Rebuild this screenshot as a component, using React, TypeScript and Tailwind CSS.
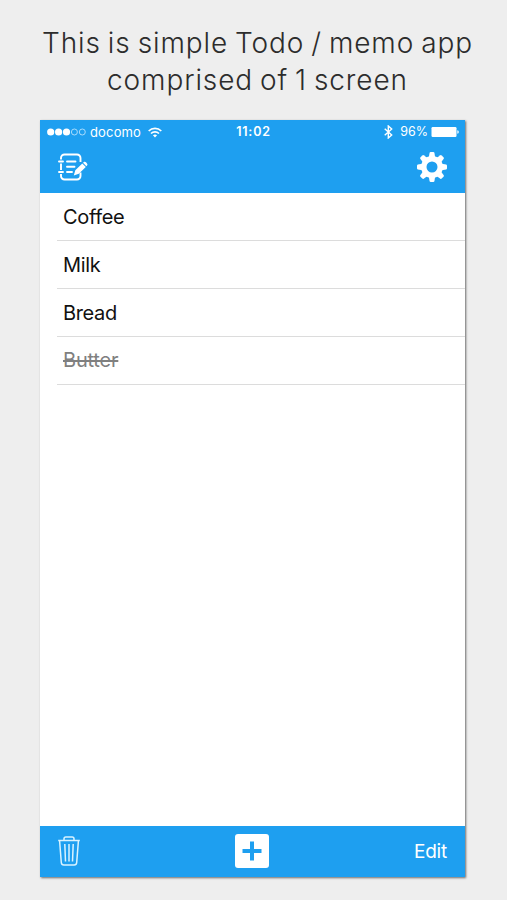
type TodoItem = {
    id: number;
    title: string;
    done: boolean;
};

const items: TodoItem[] = [
    { id: 1, title: "Coffee", done: false },
    { id: 2, title: "Milk", done: false },
    { id: 3, title: "Bread", done: false },
    { id: 4, title: "Butter", done: true },
];

function NoteIcon() {
    return (
        <svg width="32" height="30" viewBox="0 0 32 30" fill="none" stroke="white" strokeWidth="1.9">
            <path d="M24.5 10V6A3.5 3.5 0 0 0 21 2.5H8.5A3.5 3.5 0 0 0 5 6v1.5M5 11.5V18M5 22v2a3.5 3.5 0 0 0 3.5 3.5H21a3.5 3.5 0 0 0 3.5-3.5v-3.5" />
            <path d="M3 9.5h4M3 20h4M11 9.500h8.500M11 14.800h7.500M11 20h5" strokeLinecap="round" />
            <path d="M17.800 23.400l1.500-5.200 7-6.700 3.500 3.500-7 6.700zM27 10.800l.9-.8c1.400-1.200 4.400 1.900 3.300 3.300l-.8.9z" fill="white" stroke="none" />
        </svg>
    );
}

const teeth = [0, 45, 90, 135, 180, 225, 270, 315];

function GearIcon() {
    return (
        <svg width="32" height="32" viewBox="-16 -16 32 32">
            <circle r="8.2" fill="none" stroke="white" strokeWidth="5.4" />
            {teeth.map((angle) => (
                <path
                    key={angle}
                    d="M-3.200-9.500L-2.400-14.200Q-2.200-15-1.300-15H1.300Q2.200-15 2.400-14.200L3.200-9.500Z"
                    fill="white"
                    transform={`rotate(${angle})`}
                />
            ))}
        </svg>
    );
}

function TrashIcon() {
    return (
        <svg width="24" height="32" viewBox="0 0 24 32" fill="none" stroke="#d9f3ff" strokeWidth="1.5">
            <path d="M1.200 5.600h21.600M7 5.500V3.800Q7 2 8.800 2h6.400Q17 2 17 3.800v1.700M2.600 6l1.700 21.500q.2 2.500 2.500 2.500h10.400q2.300 0 2.500-2.500L21.400 6" />
            <path d="M7.800 9l.7 17.500M12 9v17.500M16.200 9l-.7 17.500" />
        </svg>
    );
}

function WifiIcon() {
    return (
        <svg width="14" height="11" viewBox="0 0 14 11" fill="none" stroke="white" strokeWidth="1.7">
            <path d="M.7 4a9 9 0 0 1 12.600 0M3 6.500a5.800 5.800 0 0 1 8 0" />
            <path d="M4.900 8.300a3.200 3.200 0 0 1 4.200 0L7 10.500z" fill="white" stroke="none" />
        </svg>
    );
}

function BluetoothIcon() {
    return (
        <svg width="9" height="14" viewBox="0 0 9 14" fill="none" stroke="white" strokeWidth="1.4">
            <path d="M.7 3.700l7 6.300-3.400 3V1l3.400 3-7 6.300" />
        </svg>
    );
}

function StatusBar() {
    return (
        <div className="grid h-6 grid-cols-[1fr_auto_1fr] items-center pr-1.5 pl-[7px] leading-none">
            <div className="flex items-center">
                <svg width="40" height="8" viewBox="0 0 40 8" fill="white">
                    <circle cx="3.7" cy="4" r="3.6" />
                    <circle cx="11.6" cy="4" r="3.6" />
                    <circle cx="19.5" cy="4" r="3.6" />
                    <circle cx="27.4" cy="4" r="3" fill="none" stroke="#c9eaff" strokeWidth=".8" />
                    <circle cx="35.3" cy="4" r="3" fill="none" stroke="#c9eaff" strokeWidth=".8" />
                </svg>
                <span className="ml-[3px] w-[58px] text-[13px] tracking-[0.15px]">docomo</span>
                <WifiIcon />
            </div>
            <div className="pl-px text-[12.5px] font-semibold tracking-[0.8px]">11:02</div>
            <div className="flex items-center justify-end">
                <BluetoothIcon />
                <span className="mr-[3px] ml-[7px] text-[12.5px]">96%</span>
                <svg width="28" height="10" viewBox="0 0 28 10" fill="white">
                    <rect x=".5" y="0" width="25" height="10" rx="1.2" />
                    <path d="M26.300 3.200q1.500.3 1.500 1.800t-1.500 1.800z" />
                </svg>
            </div>
        </div>
    );
}

function TodoRow({ item }: { item: TodoItem }) {
    return (
        <li className="ml-[17px] flex h-[47.7px] items-center border-b border-[#dcdcdc] pl-1.5">
            <span className={item.done ? "tracking-[-0.2px] text-[#808080] line-through decoration-2" : "text-[#111111]"}>
                {item.title}
            </span>
        </li>
    );
}

export default function App() {
    return (
        <div className="flex h-[900px] w-[507px] flex-col bg-[#eeeeee] font-['Inter',sans-serif]">
            <h1 className="h-[120px] pt-[25px] pl-2 text-center text-[28px] leading-[36.5px] font-[350] tracking-[0.9px] whitespace-nowrap text-[#2c2c2c] [word-spacing:-1.8px]">
                This is simple Todo / memo app
                <br />
                comprised of 1 screen
            </h1>
            <div className="ml-10 flex h-[757px] w-[425px] flex-col bg-white shadow-[1px_1px_2px_rgba(0,0,0,0.55)]">
                <header className="h-[73px] bg-[#1e9ff0] text-white">
                    <StatusBar />
                    <div className="flex h-[45px] items-center justify-between pr-[17px] pl-4">
                        <NoteIcon />
                        <GearIcon />
                    </div>
                </header>
                <ul className="grow pt-[0.8px] text-[20px] tracking-[-0.35px]">
                    {items.map((item) => (
                        <TodoRow key={item.id} item={item} />
                    ))}
                </ul>
                <footer className="grid h-[51px] grid-cols-3 items-center bg-[#1e9ff0] pr-[18px] pb-0.5 pl-[17px] text-white">
                    <TrashIcon />
                    <button className="flex size-[34px] items-center justify-center justify-self-center rounded-[3px] bg-white">
                        <svg width="20" height="20" viewBox="0 0 20 20" stroke="#1e9ff0" strokeWidth="4">
                            <path d="M10 .5v19M.5 10h19" />
                        </svg>
                    </button>
                    <button className="justify-self-end pt-1 text-[19px] tracking-[-0.2px]">Edit</button>
                </footer>
            </div>
        </div>
    );
}
